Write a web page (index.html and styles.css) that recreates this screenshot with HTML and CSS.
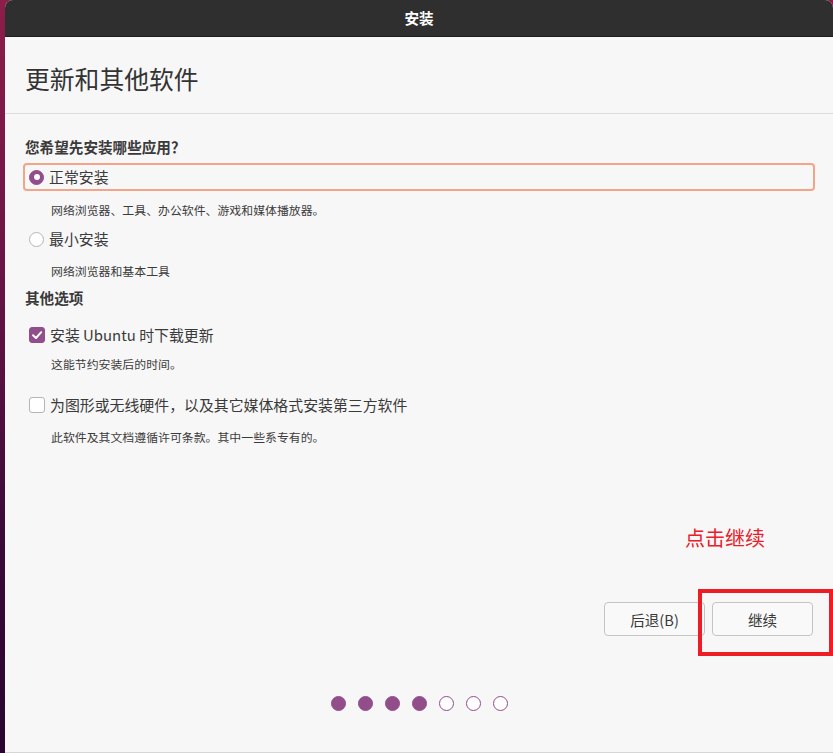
FILE: index.html
```html
<!DOCTYPE html>
<html lang="zh-CN">
<head>
<meta charset="utf-8">
<title>安装</title>
<link rel="stylesheet" href="styles.css">
</head>
<body>
<div class="window">
  <div class="titlebar">安装</div>
  <div class="page-head">更新和其他软件</div>
  <div class="content">
    <div class="label label-first">您希望先安装哪些应用？</div>
    <div class="option focused">
      <span class="radio checked"></span>
      <span class="opt-text">正常安装</span>
    </div>
    <div class="desc d1">网络浏览器、工具、办公软件、游戏和媒体播放器。</div>
    <div class="option o2">
      <span class="radio"></span>
      <span class="opt-text">最小安装</span>
    </div>
    <div class="desc d2">网络浏览器和基本工具</div>
    <div class="label label-second">其他选项</div>
    <div class="option o3">
      <span class="check checked">
        <svg viewBox="0 0 16 16" width="16" height="16"><path d="M4 8.2 L7 11 L12.2 5.2" fill="none" stroke="#fff" stroke-width="2" stroke-linecap="round" stroke-linejoin="round"/></svg>
      </span>
      <span class="opt-text">安装 Ubuntu 时下载更新</span>
    </div>
    <div class="desc d3">这能节约安装后的时间。</div>
    <div class="option o4">
      <span class="check"></span>
      <span class="opt-text">为图形或无线硬件，以及其它媒体格式安装第三方软件</span>
    </div>
    <div class="desc d4">此软件及其文档遵循许可条款。其中一些系专有的。</div>
  </div>
  <div class="buttons">
    <button class="btn">后退(B)</button>
    <button class="btn">继续</button>
  </div>
  <div class="dots">
    <span class="dot on"></span>
    <span class="dot on"></span>
    <span class="dot on"></span>
    <span class="dot on"></span>
    <span class="dot"></span>
    <span class="dot"></span>
    <span class="dot"></span>
  </div>
  <div class="note">点击继续</div>
  <div class="highlight"></div>
</div>
</body>
</html>
```

FILE: styles.css
```css
html, body {
  margin: 0;
  padding: 0;
  height: 100%;
}
body {
  width: 833px;
  height: 753px;
  overflow: hidden;
  background: linear-gradient(180deg, #8e1d4a 0%, #6a1546 35%, #3d0a3a 70%, #2a0530 100%);
  font-family: "Noto Sans CJK SC", "Noto Sans", sans-serif;
  color: #3c3c3c;
}
.window {
  position: relative;
  margin-left: 5px;
  width: 828px;
  height: 753px;
  background: #f7f7f7;
  border-radius: 8px 8px 0 0;
  overflow: hidden;
  border-bottom: 1px solid #d6d6d6;
  box-sizing: border-box;
  display: flex;
  flex-direction: column;
}
.titlebar {
  height: 36px;
  background: #302f30;
  border-bottom: 1px solid #1e1e1e;
  color: #ffffff;
  font-weight: bold;
  font-size: 14.6px;
  line-height: 36px;
  text-align: center;
  flex: none;
}
.page-head {
  height: 77px;
  box-sizing: border-box;
  padding: 24px 0 0 20px;
  font-size: 24.8px;
  line-height: 34px;
  color: #333333;
  border-bottom: 1px solid #dcdcdc;
  flex: none;
}
.content {
  padding: 0 18px 0 18px;
  display: flex;
  flex-direction: column;
}
.label {
  font-weight: bold;
  font-size: 14.6px;
  line-height: 20px;
  padding-left: 2px;
  color: #3a3a3a;
}
.label-first { margin-top: 23px; }
.label-second { margin-top: 7px; }
.option {
  height: 28px;
  box-sizing: border-box;
  border: 2px solid transparent;
  border-radius: 4px;
  display: flex;
  align-items: center;
  padding-left: 4px;
  gap: 5px;
  font-size: 14.9px;
}
.option.focused {
  margin-top: 6px;
  border-color: #f2a588;
}
.o2 { margin-top: 5px; }
.o3 { margin-top: 13px; }
.o4 { margin-top: 17px; }
.opt-text { line-height: 20px; color: #3a3a3a; }
.radio {
  width: 15px;
  height: 15px;
  box-sizing: border-box;
  border-radius: 50%;
  border: 1px solid #b5b5b5;
  background: #ffffff;
  flex: none;
  position: relative;
}
.radio.checked {
  background: #924d8b;
  border-color: #924d8b;
}
.radio.checked::after {
  content: "";
  position: absolute;
  left: 3.5px;
  top: 3.5px;
  width: 6px;
  height: 6px;
  border-radius: 50%;
  background: #ffffff;
}
.check {
  width: 16px;
  height: 16px;
  box-sizing: border-box;
  border-radius: 3px;
  border: 1px solid #b5b5b5;
  background: #ffffff;
  flex: none;
  display: flex;
}
.check.checked {
  background: #924d8b;
  border-color: #924d8b;
}
.check svg { margin: -1px; }
.desc {
  font-size: 11.9px;
  line-height: 20px;
  padding-left: 28px;
  color: #3c3c3c;
}
.d1 { margin-top: 9px; }
.d2 { margin-top: 8px; }
.d3 { margin-top: 5px; }
.d4 { margin-top: 8px; }
.buttons {
  margin-top: 155px;
  display: flex;
  justify-content: flex-end;
  gap: 7px;
  padding-right: 20px;
}
.btn {
  width: 101px;
  height: 34px;
  border: 1px solid #c4c4c4;
  border-radius: 4px;
  background: #f9f9f9;
  font-family: "Noto Sans CJK SC", "Noto Sans", sans-serif;
  font-size: 14.6px;
  color: #3a3a3a;
  padding: 0;
}
.dots {
  margin-top: 60px;
  display: flex;
  justify-content: center;
  gap: 12px;
}
.dot {
  width: 15px;
  height: 15px;
  box-sizing: border-box;
  border-radius: 50%;
  border: 1px solid #924d8b;
  background: #ffffff;
}
.dot.on { background: #924d8b; }
.note {
  position: absolute;
  left: 680px;
  top: 524px;
  font-size: 20px;
  line-height: 28px;
  color: #e8202a;
}
.highlight {
  position: absolute;
  left: 693px;
  top: 589px;
  width: 135px;
  height: 67px;
  box-sizing: border-box;
  border: 4px solid #ee1c24;
}
```
